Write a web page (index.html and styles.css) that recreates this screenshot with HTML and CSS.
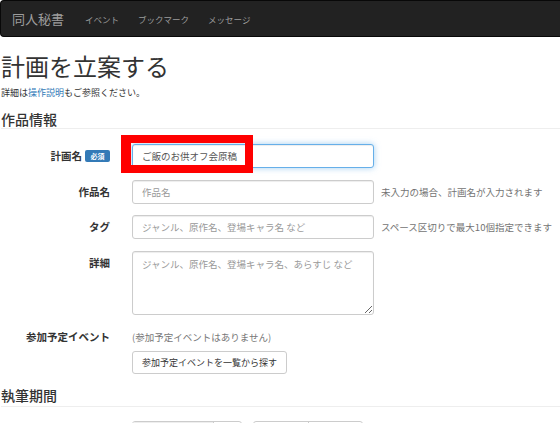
FILE: index.html
```html
<!DOCTYPE html>
<html lang="ja">
<head>
  <meta charset="UTF-8">
  <title>計画を立案する - 同人秘書</title>
  <link rel="stylesheet" href="styles.css">
</head>
<body>
  <!-- ナビゲーション -->
  <div class="navbar">
    <a href="#" class="brand">同人秘書</a>
    <a href="#" class="nav-link">イベント</a>
    <a href="#" class="nav-link">ブックマーク</a>
    <a href="#" class="nav-link">メッセージ</a>
  </div>

  <div class="container">
    <h1 class="page-title">計画を立案する</h1>
    <p class="lead-note">詳細は<a href="#">操作説明</a>もご参照ください。</p>

    <h2 class="section-title">作品情報</h2>
    <div class="form">
      <div class="form-row">
        <label class="control-label">計画名<span class="badge-required">必須</span></label>
        <div class="control">
          <input type="text" class="form-input focused" value="ご飯のお供オフ会原稿">
          <span class="highlight-box"></span>
        </div>
      </div>
      <div class="form-row">
        <label class="control-label">作品名</label>
        <div class="control">
          <input type="text" class="form-input" placeholder="作品名">
        </div>
        <span class="help">未入力の場合、計画名が入力されます</span>
      </div>
      <div class="form-row">
        <label class="control-label">タグ</label>
        <div class="control">
          <input type="text" class="form-input" placeholder="ジャンル、原作名、登場キャラ名 など">
        </div>
        <span class="help">スペース区切りで最大10個指定できます</span>
      </div>
      <div class="form-row">
        <label class="control-label">詳細</label>
        <div class="control">
          <textarea class="form-input form-textarea" placeholder="ジャンル、原作名、登場キャラ名、あらすじ など"></textarea>
        </div>
      </div>
      <div class="form-row event-row">
        <label class="control-label">参加予定イベント</label>
        <div class="control">
          <p class="static-text">(参加予定イベントはありません)</p>
          <button type="button" class="btn">参加予定イベントを一覧から探す</button>
        </div>
      </div>
    </div>

    <h2 class="section-title period-title">執筆期間</h2>
    <div class="form-row period-row">
      <span class="control-label"></span>
      <div class="input-group grey">
        <span class="ig-main"></span><span class="ig-addon"></span>
      </div>
      <div class="input-group">
        <span class="ig-main"></span><span class="ig-addon"></span>
      </div>
    </div>
  </div>
</body>
</html>
```

FILE: styles.css
```css
* {
  margin: 0;
  padding: 0;
  box-sizing: border-box;
}

body {
  font-family: "Noto Sans CJK JP", "Noto Sans", sans-serif;
  color: #333;
  background: #fff;
  overflow: hidden;
}

a {
  color: #337ab7;
  text-decoration: none;
}

/* ナビゲーション */
.navbar {
  display: flex;
  align-items: center;
  height: 37px;
  width: 100%;
  background-color: #222;
  border: 1px solid #080808;
  border-right: none;
  border-radius: 4px 0 0 4px;
  padding-left: 11px;
}

.navbar .brand {
  color: #9d9d9d;
  font-size: 13px;
  margin-right: 21px;
}

.navbar .nav-link {
  color: #9d9d9d;
  font-size: 8.5px;
  margin-right: 19px;
}

/* 本文 */
.container {
  padding-left: 1px;
}

.page-title {
  font-size: 24px;
  font-weight: 400;
  line-height: 28px;
  margin-top: 15px;
}

.lead-note {
  font-size: 9px;
  line-height: 14px;
  margin-top: 6px;
}

.section-title {
  font-size: 14px;
  font-weight: 500;
  line-height: 18px;
  margin-top: 10px;
  border-bottom: 1px solid #eee;
}

.form {
  margin-top: 15px;
}

.form-row {
  display: flex;
  align-items: flex-start;
  margin-bottom: 11.5px;
}

.control-label {
  width: 109px;
  flex-shrink: 0;
  text-align: right;
  font-size: 10.5px;
  font-weight: bold;
  line-height: 24px;
  margin-right: 22px;
}

.badge-required {
  display: inline-block;
  vertical-align: middle;
  margin-left: 3px;
  margin-top: -2px;
  width: 25px;
  height: 12px;
  line-height: 12px;
  text-align: center;
  font-size: 7px;
  color: #fff;
  background-color: #337ab7;
  border-radius: 2px;
}

.control {
  position: relative;
  width: 242px;
  flex-shrink: 0;
}

.form-input {
  display: block;
  width: 242px;
  height: 24px;
  padding: 0 9px;
  font-family: inherit;
  font-size: 9.5px;
  color: #555;
  border: 1px solid #ccc;
  border-radius: 3px;
  box-shadow: inset 0 1px 1px rgba(0, 0, 0, .075);
  outline: none;
}

.form-input::placeholder {
  color: #999;
}

.form-input.focused {
  border-color: #66afe9;
  box-shadow: inset 0 1px 1px rgba(0, 0, 0, .075), 0 0 6px rgba(102, 175, 233, .6);
}

.form-textarea {
  height: 64px;
  padding: 5px 9px;
  line-height: 14px;
  resize: vertical;
}

/* 赤枠の強調 */
.highlight-box {
  position: absolute;
  left: -11px;
  top: -9px;
  width: 132px;
  height: 38px;
  border: 8px solid #f00;
  border-left-width: 10px;
}

.help {
  font-size: 9.5px;
  line-height: 24px;
  color: #737373;
  margin-left: 7px;
  white-space: nowrap;
}

.event-row {
  margin-top: 15px;
}

.event-row .control-label {
  line-height: 14px;
}

.static-text {
  font-size: 9.5px;
  line-height: 14px;
  color: #777;
}

.btn {
  margin-top: 7px;
  height: 23px;
  padding: 0 9px;
  font-family: inherit;
  font-size: 9px;
  color: #333;
  background: #fff;
  border: 1px solid #ccc;
  border-radius: 3px;
}

.period-title {
  margin-top: 12px;
  padding-bottom: 2px;
  margin-bottom: 14px;
}

/* 期間入力 */
.period-row {
  height: 2px;
  overflow: hidden;
  margin-bottom: 0;
}

.input-group {
  display: flex;
  width: 110px;
  height: 24px;
  margin-right: 11px;
  border: 1px solid #ccc;
  border-radius: 3px;
  overflow: hidden;
}

.input-group .ig-main {
  width: 55px;
  border-right: 1px solid #ccc;
}

.input-group .ig-addon {
  flex: 1;
}

.input-group.grey .ig-main {
  width: 81px;
  background: #eee;
}
```
